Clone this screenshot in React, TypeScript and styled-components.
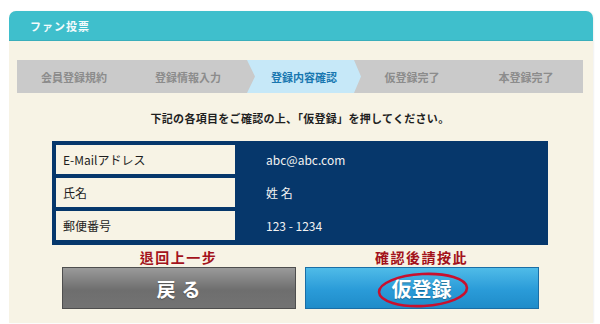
import styled, { createGlobalStyle } from "styled-components";

const GlobalStyle = createGlobalStyle`
  html, body {
    margin: 0;
    padding: 0;
    background: #ffffff;
  }
  body {
    font-family: "Noto Sans CJK JP", "Noto Sans", sans-serif;
  }
`;

const Page = styled.div`
  width: 600px;
  height: 324px;
  padding: 11px 7px 0 9px;
  box-sizing: border-box;
`;

const Panel = styled.div`
  border-radius: 7px 7px 0 0;
  overflow: hidden;
  background: #f7f3e5;
  height: 312px;
  box-shadow: 1px 0 2px rgba(0, 0, 0, 0.06);
`;

const Header = styled.div`
  height: 30px;
  background: #3fbfcc;
  border-bottom: 1px solid #39aebb;
  box-sizing: border-box;
  display: flex;
  align-items: center;
  padding-left: 21px;
  color: #f4fbfc;
  font-size: 11px;
  font-weight: 700;
  letter-spacing: 1px;
`;

const Body = styled.div`
  padding: 19px 10px 0 8px;
  display: flex;
  flex-direction: column;
  align-items: center;
`;

const Steps = styled.div`
  width: 566px;
  height: 33px;
  background: #cacaca;
  display: flex;
  align-self: flex-start;
`;

const Step = styled.div<{ $active?: boolean }>`
  flex: 1;
  display: flex;
  align-items: center;
  justify-content: center;
  font-size: 11px;
  font-weight: 700;
  color: ${(p) => (p.$active ? "#1877b0" : "#8c8c8c")};
  background: ${(p) => (p.$active ? "#c6e8f8" : "transparent")};
  clip-path: ${(p) =>
    p.$active
      ? "polygon(0 0, calc(100% - 7px) 0, 100% 50%, calc(100% - 7px) 100%, 0 100%, 8px 50%)"
      : "none"};
  margin: ${(p) => (p.$active ? "0 -6px 0 2px" : "0")};
`;

const Notice = styled.p`
  margin: 17px 0 0 0;
  font-size: 11px;
  font-weight: 700;
  color: #1f1f1f;
  letter-spacing: 0.3px;
`;

const Table = styled.div`
  margin-top: 15px;
  width: 496px;
  background: #06376b;
  padding: 4px 4px 5px 4px;
  box-sizing: border-box;
  display: flex;
  flex-direction: column;
  gap: 4px;
`;

const Row = styled.div`
  display: flex;
  height: 29px;
`;

const Label = styled.div`
  width: 179px;
  background: #f7f3e5;
  display: flex;
  align-items: center;
  padding-left: 7px;
  box-sizing: border-box;
  font-size: 12px;
  color: #1e1e1e;
`;

const Value = styled.div`
  flex: 1;
  display: flex;
  align-items: center;
  padding-left: 31px;
  font-size: 12px;
  color: #f2f2f2;
  font-family: "Noto Sans CJK JP", "Liberation Sans", sans-serif;
`;

const Actions = styled.div`
  display: flex;
  gap: 9px;
  margin-top: 2px;
`;

const ActionCol = styled.div`
  display: flex;
  flex-direction: column;
  align-items: center;
`;

const Caption = styled.div`
  height: 20px;
  display: flex;
  align-items: center;
  font-family: "Noto Sans CJK TC", serif;
  font-size: 14px;
  font-weight: 700;
  color: #a3121b;
  letter-spacing: 1.5px;
`;

const Button = styled.button<{ $variant: "back" | "primary" }>`
  position: relative;
  width: 234px;
  height: 42px;
  border: 1px solid ${(p) => (p.$variant === "back" ? "#4e4e4e" : "#1a6ea6")};
  background: ${(p) =>
    p.$variant === "back"
      ? "linear-gradient(#9a9a9a, #6e6e6e 55%, #737373)"
      : "linear-gradient(#4fbbe8, #2a9bd8 55%, #1f8cc9)"};
  color: #ffffff;
  font-family: "Noto Sans CJK JP", sans-serif;
  font-size: ${(p) => (p.$variant === "back" ? "19px" : "20px")};
  font-weight: 700;
  letter-spacing: ${(p) => (p.$variant === "back" ? "6px" : "0")};
  display: flex;
  align-items: center;
  justify-content: center;
  padding: ${(p) => (p.$variant === "back" ? "0 0 0 6px" : "0")};
  text-shadow: 0 1px 1px rgba(0, 0, 0, 0.3);
  cursor: pointer;
`;

const Circle = styled.svg`
  position: absolute;
  left: 71px;
  top: 4px;
  width: 92px;
  height: 36px;
  pointer-events: none;
`;

const steps = ["会員登録規約", "登録情報入力", "登録内容確認", "仮登録完了", "本登録完了"];

const rows = [
  { label: "E-Mailアドレス", value: "abc@abc.com" },
  { label: "氏名", value: "姓 名" },
  { label: "郵便番号", value: "123 - 1234" },
];

export default function App() {
  return (
    <Page>
      <GlobalStyle />
      <Panel>
        <Header>ファン投票</Header>
        <Body>
          <Steps>
            {steps.map((s, i) => (
              <Step key={s} $active={i === 2}>
                {s}
              </Step>
            ))}
          </Steps>
          <Notice>下記の各項目をご確認の上、「仮登録」を押してください。</Notice>
          <Table>
            {rows.map((r) => (
              <Row key={r.label}>
                <Label>{r.label}</Label>
                <Value>{r.value}</Value>
              </Row>
            ))}
          </Table>
          <Actions>
            <ActionCol>
              <Caption>退回上一步</Caption>
              <Button $variant="back">戻る</Button>
            </ActionCol>
            <ActionCol>
              <Caption>確認後請按此</Caption>
              <Button $variant="primary">
                仮登録
                <Circle viewBox="0 0 92 36">
                  <ellipse cx="46" cy="18" rx="44" ry="16" fill="none" stroke="#c8102e" strokeWidth="2.6" transform="rotate(-3 46 18)" />
                </Circle>
              </Button>
            </ActionCol>
          </Actions>
        </Body>
      </Panel>
    </Page>
  );
}
